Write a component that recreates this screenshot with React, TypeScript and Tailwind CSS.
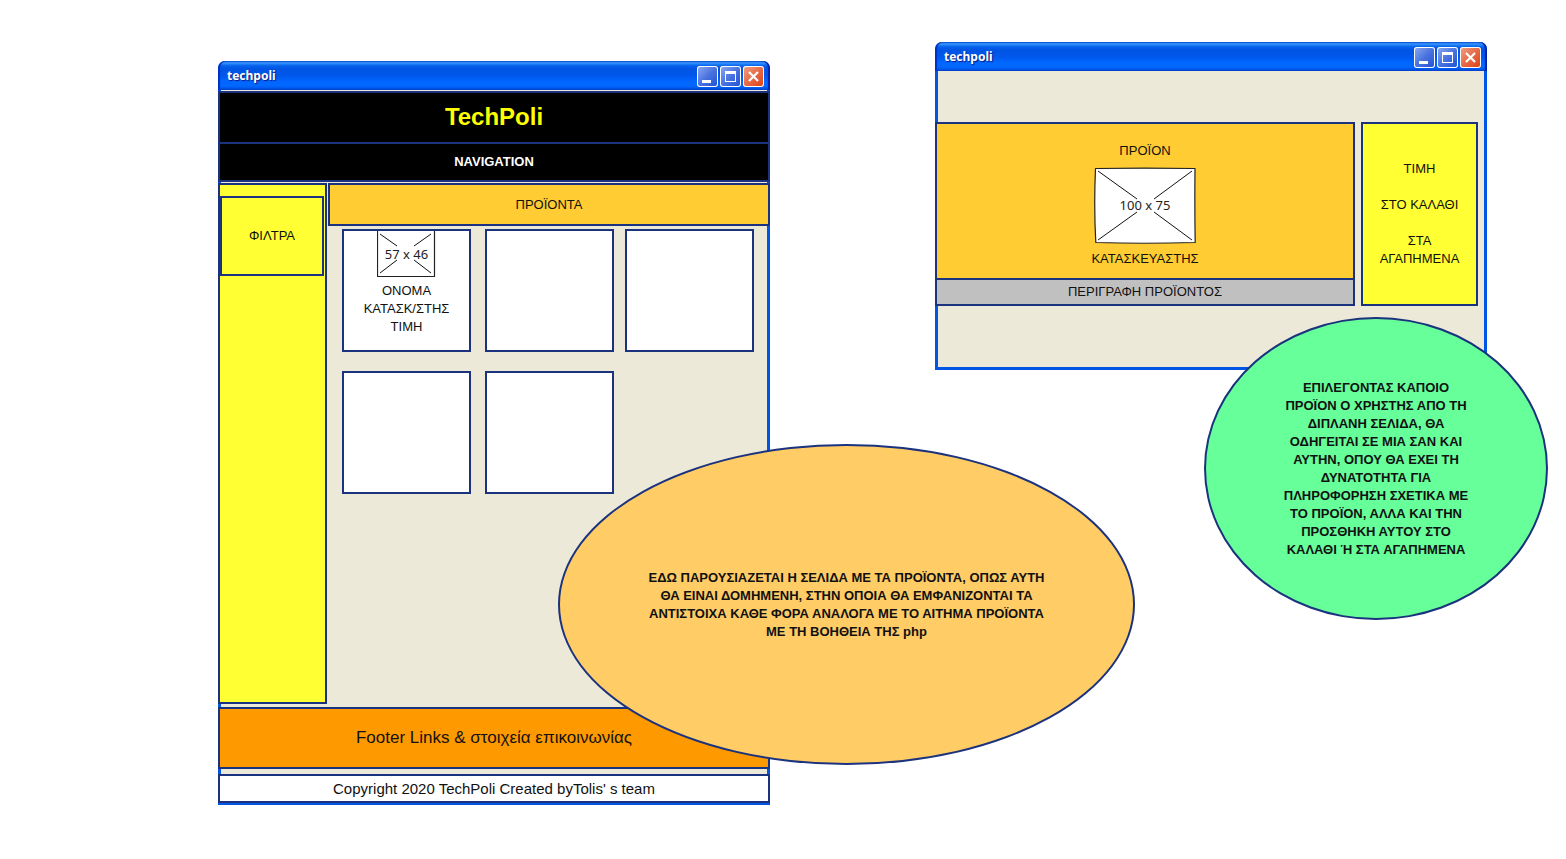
import type { ReactNode } from "react";

function Minimize() {
  return (
    <svg viewBox="0 0 21 21" className="block size-full" aria-hidden="true">
      <rect x="5" y="14" width="9" height="3" fill="#fff" />
    </svg>
  );
}

function Maximize() {
  return (
    <svg viewBox="0 0 21 21" className="block size-full" aria-hidden="true">
      <path d="M5 5h11v11H5zM6 8v7h9V8z" fill="#fff" fillRule="evenodd" />
    </svg>
  );
}

function Close() {
  return (
    <svg viewBox="0 0 21 21" className="block size-full" aria-hidden="true">
      <path d="M6 6l9 9M15 6l-9 9" stroke="#fff" strokeWidth="2.2" />
    </svg>
  );
}

const control = "size-[21px] rounded-[3px] overflow-hidden shadow-[inset_0_0_0_1px_#fff]";
const blue = "bg-linear-135 from-[#8fa9f0] via-[#4a73e0] to-[#1e50d0]";
const red = "bg-linear-135 from-[#f0a088] via-[#e66a45] to-[#dc3c08]";

function WindowFrame({ title, className, children }: { title: string; className: string; children: ReactNode }) {
  return (
    <section className={`absolute flex w-[552px] flex-col ${className}`}>
      <header className="flex h-[29px] shrink-0 items-center justify-between rounded-t-[7px] bg-[linear-gradient(180deg,#0a5ad8_0px,#3a96ff_2px,#2080f6_3px,#0560ea_5px,#0054e3_8px,#0058ec_15px,#0066ff_20px,#0068ff_25px,#0058ec_27px,#0046cc_29px)] pt-px pr-[6px] pl-[9px] shadow-[inset_2px_0_1px_#0030c0,inset_-2px_0_1px_#0020a8]">
        <h2 className="font-['Noto_Sans',sans-serif] text-[12px] leading-[18px] font-bold text-white [text-shadow:1px_1px_1px_#0a1883]">{title}</h2>
        <div className="flex gap-[2px]">
          <button type="button" aria-label="Minimize" className={`${control} ${blue}`}><Minimize /></button>
          <button type="button" aria-label="Maximize" className={`${control} ${blue}`}><Maximize /></button>
          <button type="button" aria-label="Close" className={`${control} ${red}`}><Close /></button>
        </div>
      </header>
      <div className="flex grow flex-col bg-[#ece9d8] shadow-[inset_3px_-3px_0_#0055e5,inset_-3px_0_0_#0055e5]">{children}</div>
    </section>
  );
}

function Placeholder({ width, height, frame, cross }: { width: number; height: number; frame: string; cross: string }) {
  return (
    <svg width={width} height={height} viewBox={`0 0 ${width} ${height}`} className="block shrink-0" role="img" aria-label="Image placeholder">
      <path d={frame} fill="#fff" stroke="#222" strokeWidth="1.2" strokeLinejoin="round" />
      <path d={cross} fill="none" stroke="#111" />
      <text x={width / 2} y={height / 2 + 4} textAnchor="middle" fontFamily="Noto Sans, sans-serif" fontSize="13" fill="#222">
        {`${width - 2} x ${height - 2}`}
      </text>
    </svg>
  );
}

const outline = "border-2 border-[#1b327e]";
const card = `h-[123px] w-[129px] bg-white ${outline}`;

export default function App() {
  return (
    <main className="relative min-h-screen w-full overflow-hidden bg-white font-['Liberation_Sans',sans-serif] text-[13px] leading-[18px] text-[#111]">
      <WindowFrame title="techpoli" className="top-[61px] left-[218px] h-[744px]">
        <h1 className={`mt-px flex h-[53px] items-center justify-center bg-black pb-[2px] text-[24px] leading-[28px] font-bold text-[#ffff00] ${outline}`}>TechPoli</h1>
        <nav className={`flex h-[38px] items-center justify-center border-t-0 bg-black font-bold text-white ${outline}`}>NAVIGATION</nav>
        <div className="mt-px flex h-[521px] gap-px">
          <aside className={`w-[109px] bg-[#ffff33] pt-[11px] ${outline}`}>
            <div className={`flex h-[80px] w-[104px] items-center justify-center ${outline}`}>ΦΙΛΤΡΑ</div>
          </aside>
          <div className="grow">
            <h2 className={`flex h-[43px] items-center justify-center bg-[#ffcc33] ${outline}`}>ΠΡΟΪΟΝΤΑ</h2>
            <div className="grid grid-cols-[143px_140px_129px] gap-y-[19px] pt-[3px] pl-[14px]">
              <div className={`flex flex-col items-center text-center ${card}`}>
                <Placeholder width={59} height={48} frame="M.500 -.500H57.500V45.500H.500Z" cross="M3 3L20 15M54 3L37 15M3 42L20 29M54 42L37 29" />
                <p className="mt-[3px]">ΟΝΟΜΑ<br />ΚΑΤΑΣΚ/ΣΤΗΣ<br />ΤΙΜΗ</p>
              </div>
              <div className={card} />
              <div className={card} />
              <div className={card} />
              <div className={card} />
            </div>
          </div>
        </div>
        <footer>
          <div className={`mt-[3px] flex h-[62px] items-center justify-center bg-[#ff9900] text-[17px] ${outline}`}>Footer Links &amp; στοιχεία επικοινωνίας</div>
          <div className={`mt-[5px] flex h-[29px] items-center justify-center bg-white text-[15px] ${outline}`}>Copyright 2020 TechPoli Created byTolis' s team</div>
        </footer>
      </WindowFrame>

      <WindowFrame title="techpoli" className="top-[42px] left-[935px] h-[328px]">
        <div className="mt-[51px] flex h-[184px] gap-[6px] pr-[9px]">
          <div className="flex grow flex-col">
            <div className={`flex h-[156px] flex-col items-center border-b-0 bg-[#ffcc33] pt-[18px] ${outline}`}>
              <p>ΠΡΟΪΟΝ</p>
              <div className="mt-[7px] mb-[6px]">
                <Placeholder width={102} height={77} frame="M1.500 1.500Q50 .8 101 1.500Q100.600 40 101.200 75.500Q50 77 1.800 75.500Q-.2 40 1.500 1.500Z" cross="M4 4L43 32M98 4L60 32M4 73L43 45M98 73L60 45" />
              </div>
              <p>ΚΑΤΑΣΚΕΥΑΣΤΗΣ</p>
            </div>
            <div className={`flex h-[28px] items-center justify-center bg-[#c0c0c0] ${outline}`}>ΠΕΡΙΓΡΑΦΗ ΠΡΟΪΟΝΤΟΣ</div>
          </div>
          <div className={`flex w-[117px] flex-col items-center justify-center gap-[18px] bg-[#ffff33] text-center ${outline}`}>
            <p>ΤΙΜΗ</p>
            <p>ΣΤΟ ΚΑΛΑΘΙ</p>
            <p>ΣΤΑ<br />ΑΓΑΠΗΜΕΝΑ</p>
          </div>
        </div>
      </WindowFrame>

      <div className={`absolute top-[444px] left-[558px] flex h-[321px] w-[577px] items-center justify-center rounded-[50%] bg-[#ffcc66] text-center font-bold ${outline}`}>
        <p>
          ΕΔΩ ΠΑΡΟΥΣΙΑΖΕΤΑΙ Η ΣΕΛΙΔΑ ΜΕ ΤΑ ΠΡΟΪΟΝΤΑ, ΟΠΩΣ ΑΥΤΗ<br />
          ΘΑ ΕΙΝΑΙ ΔΟΜΗΜΕΝΗ, ΣΤΗΝ ΟΠΟΙΑ ΘΑ ΕΜΦΑΝΙΖΟΝΤΑΙ ΤΑ<br />
          ΑΝΤΙΣΤΟΙΧΑ ΚΑΘΕ ΦΟΡΑ ΑΝΑΛΟΓΑ ΜΕ ΤΟ ΑΙΤΗΜΑ ΠΡΟΪΟΝΤΑ<br />
          ΜΕ ΤΗ ΒΟΗΘΕΙΑ ΤΗΣ php
        </p>
      </div>

      <div className={`absolute top-[317px] left-[1204px] flex h-[303px] w-[344px] items-center justify-center rounded-[50%] bg-[#66ff99] text-center font-bold ${outline}`}>
        <p>
          ΕΠΙΛΕΓΟΝΤΑΣ ΚΑΠΟΙΟ<br />
          ΠΡΟΪΟΝ Ο ΧΡΗΣΤΗΣ ΑΠΟ ΤΗ<br />
          ΔΙΠΛΑΝΗ ΣΕΛΙΔΑ, ΘΑ<br />
          ΟΔΗΓΕΙΤΑΙ ΣΕ ΜΙΑ ΣΑΝ ΚΑΙ<br />
          ΑΥΤΗΝ, ΟΠΟΥ ΘΑ ΕΧΕΙ ΤΗ<br />
          ΔΥΝΑΤΟΤΗΤΑ ΓΙΑ<br />
          ΠΛΗΡΟΦΟΡΗΣΗ ΣΧΕΤΙΚΑ ΜΕ<br />
          ΤΟ ΠΡΟΪΟΝ, ΑΛΛΑ ΚΑΙ ΤΗΝ<br />
          ΠΡΟΣΘΗΚΗ ΑΥΤΟΥ ΣΤΟ<br />
          ΚΑΛΑΘΙ Ή ΣΤΑ ΑΓΑΠΗΜΕΝΑ
        </p>
      </div>
    </main>
  );
}
